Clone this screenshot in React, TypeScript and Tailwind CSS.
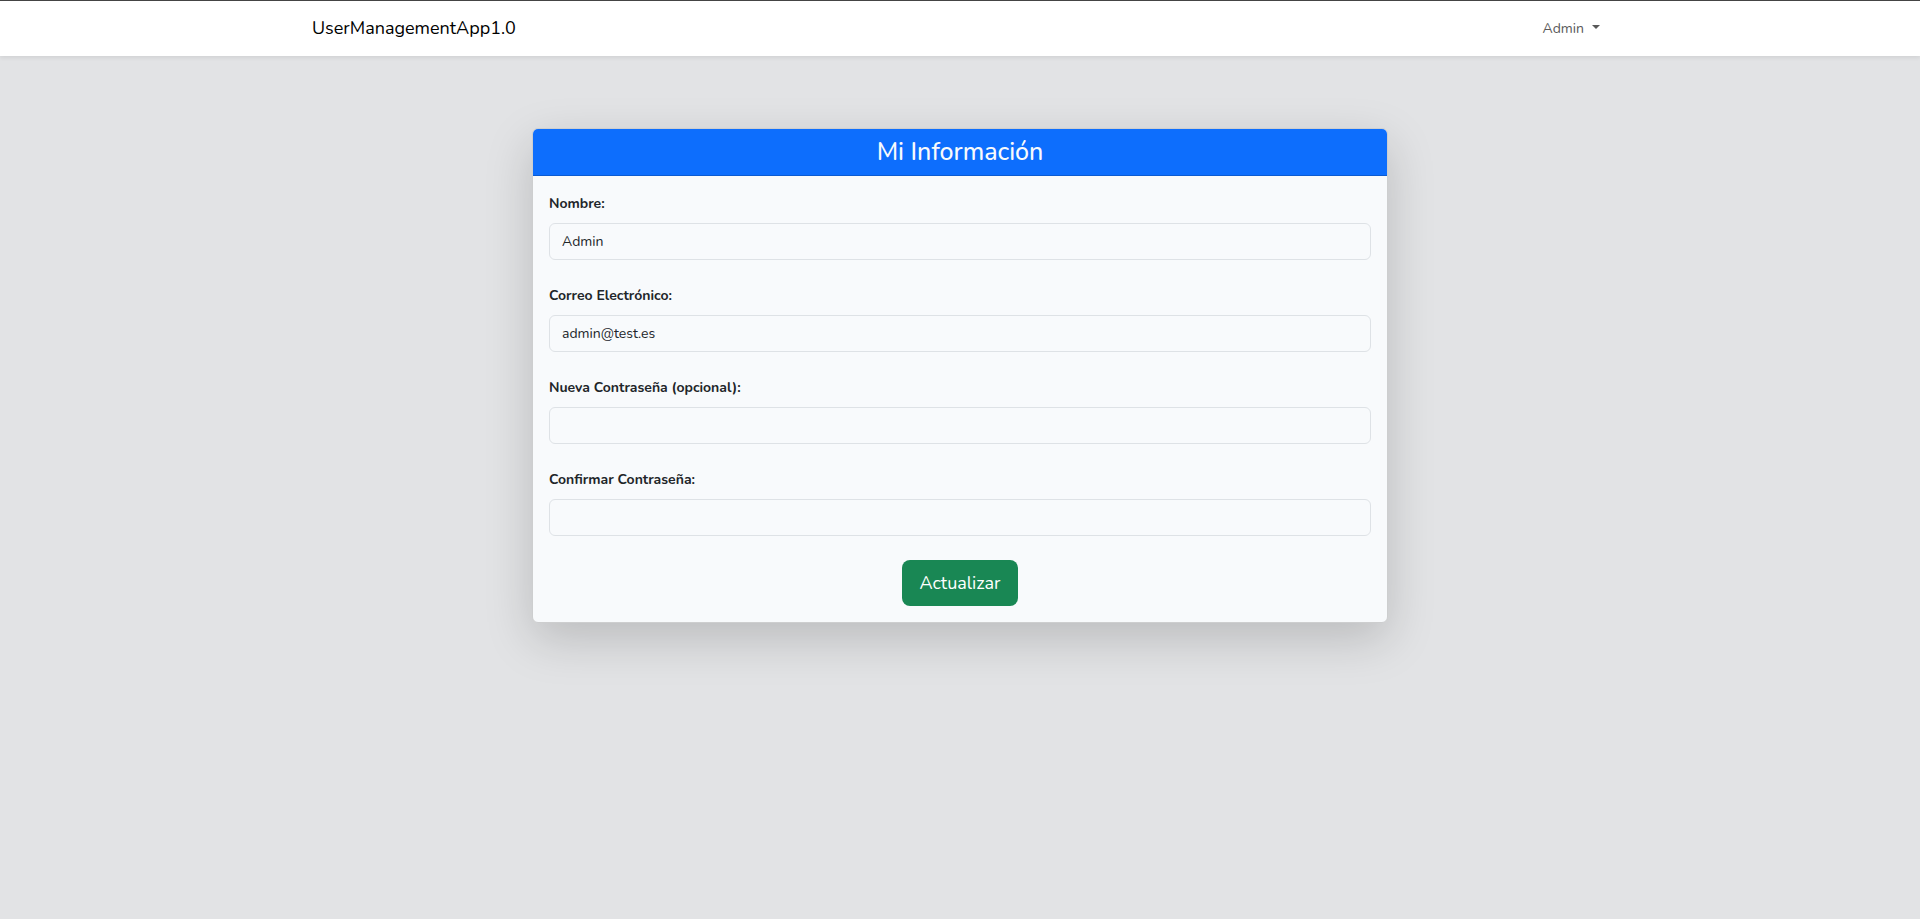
import { useState } from "react";

type FieldProps = {
  id: string;
  label: string;
  type: string;
  initial?: string;
};

function Field({ id, label, type, initial = "" }: FieldProps) {
  const [value, setValue] = useState(initial);
  return (
    <div className="mb-6">
      <label htmlFor={id} className="mb-2 block text-[14px] leading-[23px] font-bold">
        {label}
      </label>
      <input
        id={id}
        type={type}
        value={value}
        onChange={(e) => setValue(e.target.value)}
        className="block h-[37px] w-full rounded-md border border-[#dee2e6] bg-[#f8fafc] px-3 text-[14px] leading-[23px] text-[#212529] outline-none focus:border-[#86b7fe]"
      />
    </div>
  );
}

export default function App() {
  return (
    <div className="min-h-screen bg-[#e2e3e5] font-['Nunito','Lato',sans-serif] text-[#212529]">
      <nav className="border-t border-[#444444] bg-white shadow-[0_2px_4px_rgba(0,0,0,0.075)]">
        <div className="mx-auto flex h-[55px] max-w-[1320px] items-center justify-between px-3">
          <a href="#" className="text-[18px] leading-[29px] text-black">
            UserManagementApp1.0
          </a>
          <button type="button" className="flex items-center gap-2 px-2 text-[14px] leading-[23px] text-[#595959]">
            Admin
            <svg className="mb-1" width="8" height="4" viewBox="0 0 8 4" fill="currentColor" aria-hidden="true">
              <path d="M0 0h8L4 4z" />
            </svg>
          </button>
        </div>
      </nav>
      <main className="mx-auto max-w-[880px] px-3 pt-[72px] pb-12">
        <section className="overflow-hidden rounded-md border border-[#cdcecf] bg-[#f8fafc] shadow-[0_16px_48px_rgba(0,0,0,0.175)]">
          <header className="border-b border-[#0b5bd1] bg-[#0d6efd] px-4 py-2 text-center">
            <h1 className="text-[25px] leading-[30px] font-medium text-[#f8fafc]">Mi Información</h1>
          </header>
          <form className="p-4" onSubmit={(e) => e.preventDefault()}>
            <Field id="name" label="Nombre:" type="text" initial="Admin" />
            <Field id="email" label="Correo Electrónico:" type="email" initial="admin@test.es" />
            <Field id="password" label="Nueva Contraseña (opcional):" type="password" />
            <Field id="password-confirm" label="Confirmar Contraseña:" type="password" />
            <div className="text-center">
              <button
                type="submit"
                className="rounded-lg bg-[#198754] px-[17px] py-2 align-top text-[18px] leading-[30px] text-white"
              >
                Actualizar
              </button>
            </div>
          </form>
        </section>
      </main>
    </div>
  );
}
